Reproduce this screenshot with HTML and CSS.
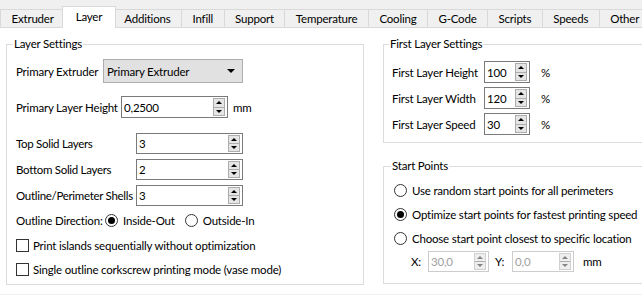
FILE: index.html
```html
<!DOCTYPE html>
<html lang="en">
<head>
    <meta charset="UTF-8">
    <title>Layer Settings</title>
    <link rel="stylesheet" href="styles.css">
</head>
<body>

    <div class="tabs">
        <div class="tab">Extruder</div>
        <div class="tab active">Layer</div>
        <div class="tab">Additions</div>
        <div class="tab">Infill</div>
        <div class="tab">Support</div>
        <div class="tab">Temperature</div>
        <div class="tab">Cooling</div>
        <div class="tab">G-Code</div>
        <div class="tab">Scripts</div>
        <div class="tab">Speeds</div>
        <div class="tab">Other</div>
    </div>

    <div class="pane">
        <!-- left group -->
        <fieldset class="group layer-group">
            <legend>Layer Settings</legend>

            <div class="row extruder-row">
                <span class="label w-extruder">Primary Extruder</span>
                <div class="combo">Primary Extruder<span class="combo-arrow"></span></div>
            </div>

            <div class="row height-row">
                <span class="label w-height">Primary Layer Height</span>
                <div class="spin w-layer">
                    <span class="value">0,2500</span>
                    <span class="spin-btns"><span class="up"></span><span class="down"></span></span>
                </div>
                <span class="unit">mm</span>
            </div>

            <div class="count-grid">
                <span class="label">Top Solid Layers</span>
                <div class="spin">
                    <span class="value">3</span>
                    <span class="spin-btns"><span class="up"></span><span class="down"></span></span>
                </div>
                <span class="label">Bottom Solid Layers</span>
                <div class="spin">
                    <span class="value">2</span>
                    <span class="spin-btns"><span class="up"></span><span class="down"></span></span>
                </div>
                <span class="label">Outline/Perimeter Shells</span>
                <div class="spin">
                    <span class="value">3</span>
                    <span class="spin-btns"><span class="up"></span><span class="down"></span></span>
                </div>
            </div>

            <div class="row direction-row">
                <span class="label w-direction">Outline Direction:</span>
                <span class="option"><span class="radio checked"></span>Inside-Out</span>
                <span class="option"><span class="radio"></span>Outside-In</span>
            </div>

            <div class="row check-row">
                <span class="checkbox"></span>Print islands sequentially without optimization
            </div>
            <div class="row check-row">
                <span class="checkbox"></span>Single outline corkscrew printing mode (vase mode)
            </div>
        </fieldset>

        <div class="right-col">
            <fieldset class="group first-group">
                <legend>First Layer Settings</legend>

                <div class="row pct-row">
                    <span class="label w-first">First Layer Height</span>
                    <div class="spin w-pct">
                        <span class="value">100</span>
                        <span class="spin-btns"><span class="up"></span><span class="down"></span></span>
                    </div>
                    <span class="unit">%</span>
                </div>
                <div class="row pct-row">
                    <span class="label w-first">First Layer Width</span>
                    <div class="spin w-pct">
                        <span class="value">120</span>
                        <span class="spin-btns"><span class="up"></span><span class="down"></span></span>
                    </div>
                    <span class="unit">%</span>
                </div>
                <div class="row pct-row">
                    <span class="label w-first">First Layer Speed</span>
                    <div class="spin w-pct">
                        <span class="value">30</span>
                        <span class="spin-btns"><span class="up"></span><span class="down"></span></span>
                    </div>
                    <span class="unit">%</span>
                </div>
            </fieldset>

            <fieldset class="group start-group">
                <legend>Start Points</legend>

                <div class="row start-row"><span class="radio"></span>Use random start points for all perimeters</div>
                <div class="row start-row"><span class="radio checked"></span>Optimize start points for fastest printing speed</div>
                <div class="row start-row"><span class="radio"></span>Choose start point closest to specific location</div>

                <div class="row xy-row">
                    <span class="label w-axis">X:</span>
                    <div class="spin disabled w-x">
                        <span class="value">30,0</span>
                        <span class="spin-btns"><span class="up"></span><span class="down"></span></span>
                    </div>
                    <span class="label w-axis axis-y">Y:</span>
                    <div class="spin disabled w-y">
                        <span class="value">0,0</span>
                        <span class="spin-btns"><span class="up"></span><span class="down"></span></span>
                    </div>
                    <span class="unit xy-unit">mm</span>
                </div>
            </fieldset>
        </div>
    </div>

</body>
</html>
```

FILE: styles.css
```css
body {
    margin: 0;
    width: 642px;
    height: 295px;
    overflow: hidden;
    background-color: #f0f0f0;
    font-family: Lato, "Noto Sans", sans-serif;
    font-size: 11.5px;
    letter-spacing: -0.2px;
    color: #000;
}

/* tab bar */
.tabs {
    display: flex;
    align-items: flex-end;
    height: 27px;
}

.tab {
    box-sizing: border-box;
    height: 18px;
    padding: 0 10.5px;
    margin-right: -1px;
    border: 1px solid #d9d9d9;
    border-bottom: none;
    line-height: 17px;
    white-space: nowrap;
}

.tab.active {
    position: relative;
    z-index: 1;
    height: 22px;
    margin: 0 -3px -1px -2px;
    padding: 0 12.5px;
    background-color: #fff;
    line-height: 19px;
}

.pane {
    display: flex;
    gap: 19px;
    height: 267px;
    padding: 8px 0 0 6px;
    box-sizing: border-box;
    background-color: #fff;
    border-top: 1px solid #d9d9d9;
}

/* group boxes */
.group {
    box-sizing: border-box;
    margin: 0;
    padding: 7px 9px 0 9px;
    border: 1px solid #dcdcdc;
    min-width: 0;
}

.group legend {
    padding: 0 1px;
    margin-left: -3px;
    line-height: 16px;
}

.layer-group {
    width: 358px;
    height: 249px;
    flex-shrink: 0;
}

.right-col {
    width: 280px;
    flex-shrink: 0;
}

.first-group {
    height: 107px;
    padding-top: 9px;
    padding-left: 8px;
}

.start-group {
    height: 126px;
    margin-top: 15px;
    padding-top: 6px;
    padding-left: 10px;
}

/* rows */
.row {
    display: flex;
    align-items: center;
    white-space: nowrap;
}

.label {
    flex-shrink: 0;
    white-space: nowrap;
}

.w-extruder { width: 87px; }
.w-height { width: 105px; }
.w-first { width: 92px; }
.w-direction { width: 89px; }

.extruder-row { height: 24px; }
.height-row { height: 22px; margin-top: 13px; }

.count-grid {
    display: grid;
    grid-template-columns: 120px 107px;
    grid-auto-rows: 21px;
    row-gap: 5px;
    align-items: center;
    margin-top: 15px;
}

.count-grid .label { letter-spacing: -0.3px; }

.direction-row { height: 20px; margin-top: 4px; }
.check-row { height: 20px; margin-top: 5px; }
.check-row + .check-row { margin-top: 4px; }

.pct-row { height: 22px; }
.pct-row + .pct-row { margin-top: 4px; }

.start-row { height: 20px; }
.start-row + .start-row { margin-top: 4px; }

.xy-row { height: 21px; margin-top: 3px; padding-left: 17px; }
.w-axis { width: 17px; }
.axis-y { margin-left: 6px; }

.unit { margin-left: 5px; }
.pct-row .unit { margin-left: 11px; }
.xy-unit { margin-left: 9px; }

/* combo box */
.combo {
    box-sizing: border-box;
    display: flex;
    align-items: center;
    justify-content: space-between;
    width: 140px;
    height: 24px;
    padding: 0 7px 0 3px;
    background-color: #e1e1e1;
    border: 1px solid #adadad;
}

.combo-arrow {
    border-left: 4px solid transparent;
    border-right: 4px solid transparent;
    border-top: 4px solid #000;
}

/* spin boxes */
.spin {
    box-sizing: border-box;
    display: flex;
    height: 100%;
    background-color: #fff;
    border: 1px solid #7a7a7a;
}

.w-layer { width: 107px; }
.w-pct { width: 46px; }
.w-x { width: 61px; }
.w-y { width: 62px; }

.spin .value {
    flex: 1;
    padding-left: 2px;
    display: flex;
    align-items: center;
}

.spin-btns {
    box-sizing: border-box;
    display: flex;
    flex-direction: column;
    width: 12px;
    margin: 1px 2px 1px 0;
    border: 1px solid #adadad;
    background-color: #e5e5e5;
}

.spin-btns span {
    flex: 1;
    display: flex;
    align-items: center;
    justify-content: center;
}

.spin-btns .down {
    border-top: 1px solid #adadad;
}

.spin-btns .up::after,
.spin-btns .down::after {
    content: "";
    border-left: 3px solid transparent;
    border-right: 3px solid transparent;
}

.spin-btns .up::after { border-bottom: 3px solid #000; }
.spin-btns .down::after { border-top: 3px solid #000; }

.spin.disabled {
    border-color: #cccccc;
    color: #a0a0a0;
}

.spin.disabled .spin-btns {
    border-color: #d0d0d0;
    background-color: #eeeeee;
}

.spin.disabled .up::after { border-bottom-color: #838383; }
.spin.disabled .down::after { border-top-color: #838383; }

/* radios and checks */
.option {
    display: flex;
    align-items: center;
}

.option + .option { margin-left: 10px; }

.radio {
    box-sizing: border-box;
    display: flex;
    align-items: center;
    justify-content: center;
    width: 13px;
    height: 13px;
    margin-right: 5px;
    border: 1px solid #333;
    border-radius: 50%;
    background-color: #fff;
    flex-shrink: 0;
}

.radio.checked::after {
    content: "";
    width: 7px;
    height: 7px;
    border-radius: 50%;
    background-color: #000;
}

.checkbox {
    box-sizing: border-box;
    width: 13px;
    height: 13px;
    margin-right: 4px;
    border: 1px solid #333;
    background-color: #fff;
    flex-shrink: 0;
}
```
